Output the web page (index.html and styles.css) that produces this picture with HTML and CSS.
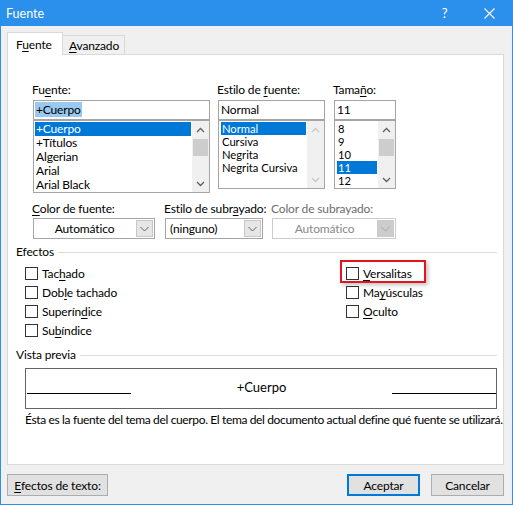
FILE: index.html
```html
<!DOCTYPE html>
<html lang="es">
<head>
<meta charset="utf-8">
<title>Fuente</title>
<link rel="stylesheet" href="styles.css">
</head>
<body>
<div class="window">
  <div class="titlebar">
    <span class="title">Fuente</span>
    <div class="caption">
      <span class="cap-btn help">?</span>
      <span class="cap-btn close"><svg width="11" height="11" viewBox="0 0 11 11"><path d="M0.5 0.5L10.5 10.5M10.5 0.5L0.5 10.5" stroke="#fff" stroke-width="1.1" fill="none"/></svg></span>
    </div>
  </div>
  <div class="client">
    <div class="tabs">
      <div class="tab active">F<u>u</u>ente</div>
      <div class="tab"><u>A</u>vanzado</div>
    </div>
    <div class="panel">
      <div class="font-row">
        <div class="col col-font">
          <div class="label">Fu<u>e</u>nte:</div>
          <div class="input"><span class="sel">+Cuerpo</span></div>
          <div class="list list-font">
            <div class="items">
              <div class="item selected">+Cuerpo</div>
              <div class="item">+Títulos</div>
              <div class="item">Algerian</div>
              <div class="item">Arial</div>
              <div class="item">Arial Black</div>
            </div>
            <div class="scrollbar">
              <div class="arrow-btn"><svg width="9" height="6" viewBox="0 0 9 6"><path d="M1 5L4.5 1.5L8 5" stroke="#606060" stroke-width="1.3" fill="none"/></svg></div>
              <div class="track"><div class="thumb"></div></div>
              <div class="arrow-btn"><svg width="9" height="6" viewBox="0 0 9 6"><path d="M1 1L4.5 4.5L8 1" stroke="#606060" stroke-width="1.3" fill="none"/></svg></div>
            </div>
          </div>
        </div>
        <div class="col col-style">
          <div class="label">Estilo de <u>f</u>uente:</div>
          <div class="input">Normal</div>
          <div class="list list-small">
            <div class="items">
              <div class="item selected">Normal</div>
              <div class="item">Cursiva</div>
              <div class="item">Negrita</div>
              <div class="item">Negrita Cursiva</div>
            </div>
            <div class="scrollbar">
              <div class="arrow-btn"><svg width="9" height="6" viewBox="0 0 9 6"><path d="M1 5L4.5 1.5L8 5" stroke="#c8c8c8" stroke-width="1.3" fill="none"/></svg></div>
              <div class="track"></div>
              <div class="arrow-btn"><svg width="9" height="6" viewBox="0 0 9 6"><path d="M1 1L4.5 4.5L8 1" stroke="#c8c8c8" stroke-width="1.3" fill="none"/></svg></div>
            </div>
          </div>
        </div>
        <div class="col col-size">
          <div class="label">Tama<u>ñ</u>o:</div>
          <div class="input">11</div>
          <div class="list list-small">
            <div class="items">
              <div class="item">8</div>
              <div class="item">9</div>
              <div class="item">10</div>
              <div class="item selected">11</div>
              <div class="item">12</div>
            </div>
            <div class="scrollbar">
              <div class="arrow-btn"><svg width="9" height="6" viewBox="0 0 9 6"><path d="M1 5L4.5 1.5L8 5" stroke="#606060" stroke-width="1.3" fill="none"/></svg></div>
              <div class="track"><div class="thumb"></div></div>
              <div class="arrow-btn"><svg width="9" height="6" viewBox="0 0 9 6"><path d="M1 1L4.5 4.5L8 1" stroke="#606060" stroke-width="1.3" fill="none"/></svg></div>
            </div>
          </div>
        </div>
      </div>

      <div class="combo-row">
        <div class="combo-col c1">
          <div class="label"><u>C</u>olor de fuente:</div>
          <div class="combo">
            <div class="value center">Automático</div>
            <div class="drop"><svg width="9" height="6" viewBox="0 0 9 6"><path d="M0.5 1L4.5 5L8.5 1" stroke="#606060" stroke-width="1" fill="none"/></svg></div>
          </div>
        </div>
        <div class="combo-col c2">
          <div class="label">Estilo de subr<u>a</u>yado:</div>
          <div class="combo">
            <div class="value">(ninguno)</div>
            <div class="drop"><svg width="9" height="6" viewBox="0 0 9 6"><path d="M0.5 1L4.5 5L8.5 1" stroke="#606060" stroke-width="1" fill="none"/></svg></div>
          </div>
        </div>
        <div class="combo-col c3">
          <div class="label disabled-text">Color de subrayado:</div>
          <div class="combo disabled">
            <div class="value center">Automático</div>
            <div class="drop"><svg width="9" height="6" viewBox="0 0 9 6"><path d="M0.5 1L4.5 5L8.5 1" stroke="#a8a8a8" stroke-width="1" fill="none"/></svg></div>
          </div>
        </div>
      </div>

      <div class="group-head head-effects"><span>Efectos</span><div class="rule"></div></div>
      <div class="effects">
        <div class="effects-col left">
          <div class="check"><span class="box"></span><span>Tac<u>h</u>ado</span></div>
          <div class="check"><span class="box"></span><span>Dob<u>l</u>e tachado</span></div>
          <div class="check"><span class="box"></span><span>Superín<u>d</u>ice</span></div>
          <div class="check"><span class="box"></span><span>Su<u>b</u>índice</span></div>
        </div>
        <div class="effects-col">
          <div class="check marked"><span class="box"></span><span><u>V</u>ersalitas</span><span class="highlight"></span></div>
          <div class="check"><span class="box"></span><span>Ma<u>y</u>úsculas</span></div>
          <div class="check"><span class="box"></span><span><u>O</u>culto</span></div>
        </div>
      </div>

      <div class="group-head head-preview"><span>Vista previa</span><div class="rule"></div></div>
      <div class="preview">
        <div class="pline"></div>
        <div class="ptext">+Cuerpo</div>
        <div class="pline"></div>
      </div>
      <div class="note">Ésta es la fuente del tema del cuerpo. El tema del documento actual define qué fuente se utilizará.</div>
    </div>

    <div class="footer">
      <div class="btn btn-effects"><u>E</u>fectos de texto:</div>
      <div class="btn btn-ok">Aceptar</div>
      <div class="btn btn-cancel">Cancelar</div>
    </div>
  </div>
</div>
</body>
</html>
```
FILE: styles.css
```css
* { box-sizing: border-box; }
html, body { margin: 0; padding: 0; }
body {
  width: 513px;
  height: 505px;
  overflow: hidden;
  background: #f0f0f0;
  font-family: Lato, "Noto Sans", sans-serif;
  font-size: 12px;
  letter-spacing: -0.15px;
  color: #000;
}
u { text-decoration: underline; text-underline-offset: 2px; text-decoration-thickness: 1px; }

.window {
  width: 513px;
  height: 505px;
  border: 1px solid #2b8fec;
  border-top: 0;
  display: flex;
  flex-direction: column;
  background: #f0f0f0;
}
.titlebar {
  height: 26px;
  flex: none;
  background: #2b8fec;
  color: #fff;
  display: flex;
  align-items: center;
  padding-left: 5px;
}
.title { font-size: 12.5px; letter-spacing: 0; }
.caption { margin-left: auto; display: flex; height: 26px; }
.cap-btn {
  width: 46px;
  height: 26px;
  display: flex;
  align-items: center;
  justify-content: center;
}
.help { font-size: 13px; padding-left: 3px; }

.client {
  flex: 1;
  display: flex;
  flex-direction: column;
  padding: 6px 8px 0 6px;
}

/* Tabs */
.tabs {
  height: 22px;
  display: flex;
  align-items: flex-end;
}
.tab {
  height: 19px;
  width: 62px;
  border-top: 1px solid #d9d9d9;
  border-right: 1px solid #d9d9d9;
  background: #f0f0f0;
  padding-left: 6px;
  line-height: 19px;
}
.tab.active {
  height: 23px;
  width: 56px;
  margin-bottom: -1px;
  position: relative;
  z-index: 1;
  background: #fff;
  border-left: 1px solid #d9d9d9;
  padding-left: 8px;
  line-height: 23px;
}

/* Panel */
.panel {
  height: 411px;
  flex: none;
  background: #fff;
  border: 1px solid #d9d9d9;
  padding: 27px 6px 0 8px;
}
.label { height: 16px; line-height: 16px; margin-bottom: 2px; margin-left: -1px; white-space: nowrap; }
.disabled-text { color: #6d6d6d; }

.font-row { display: flex; align-items: flex-start; margin-left: 17px; }
.col-font { width: 177px; }
.col-style { width: 107px; margin-left: 8px; }
.col-size { width: 62px; margin-left: 9px; }

.input {
  height: 20px;
  border: 1px solid #a5a5a5;
  padding-left: 2px;
  line-height: 18px;
  white-space: nowrap;
}
.sel { background: #99c9ef; padding: 0 1px; margin-left: -1px; }

.list {
  border: 1px solid #a5a5a5;
  display: flex;
  overflow: hidden;
}
.list-font { height: 73px; }
.list-small { height: 69px; }
.items { flex: 1; min-width: 0; padding: 1px; overflow: hidden; }
.item { height: 14px; line-height: 14px; padding-left: 1px; white-space: nowrap; overflow: hidden; }
.list-small .items { padding: 1px 1px 1px 2px; }
.list-small .item { height: 13px; line-height: 13px; font-size: 11.2px; letter-spacing: 0; }
.item.selected { background: #0078d7; color: #fff; }

.scrollbar {
  width: 17px;
  flex: none;
  background: #f0f0f0;
  display: flex;
  flex-direction: column;
}
.arrow-btn { height: 17px; display: flex; align-items: center; justify-content: center; }
.track { flex: 1; }
.thumb { height: 17px; margin: 1px 1px 0 1px; background: #cdcdcd; }

/* Combos */
.combo-row { display: flex; margin-top: 8px; margin-left: 17px; }
.c1 { width: 122px; }
.c2 { width: 98px; margin-left: 10px; }
.c3 { width: 124px; margin-left: 9px; }
.combo-row .label { margin-bottom: 1px; }
.combo {
  height: 21px;
  border: 1px solid #a5a5a5;
  display: flex;
  background: #fff;
}
.combo .value { flex: 1; line-height: 19px; padding-left: 4px; white-space: nowrap; }
.combo .value.center { text-align: center; padding-left: 0; }
.drop {
  width: 17px;
  margin: 1px;
  background: #e6e6e6;
  border: 1px solid #c8c8c8;
  display: flex;
  align-items: center;
  justify-content: center;
}
.combo.disabled { border-color: #cccccc; }
.combo.disabled .value { color: #8a8a8a; }
.combo.disabled .drop { background: #cccccc; border-color: #cccccc; }

/* Groups */
.group-head { display: flex; align-items: center; height: 16px; line-height: 16px; }
.group-head .rule { flex: 1; height: 1px; background: #dcdcdc; margin-left: 4px; }
.head-effects { margin-top: 5px; }
.head-preview { margin-top: 7px; }

.effects { display: flex; margin-top: 4px; margin-left: 9px; }
.effects-col.left { width: 321px; }
.check {
  height: 19px;
  display: flex;
  align-items: center;
  white-space: nowrap;
}
.box {
  width: 13px;
  height: 13px;
  border: 1px solid #333;
  background: #fff;
  margin-right: 4px;
  flex: none;
}
.marked { position: relative; }
.highlight {
  position: absolute;
  left: -6px;
  top: -4px;
  width: 86px;
  height: 23px;
  border: 2px solid #e3141b;
  box-shadow: 2px 2px 4px rgba(0,0,0,0.25);
}

.preview {
  margin: 5px 0 0 9px;
  height: 41px;
  border: 1px solid #646464;
  display: flex;
  align-items: flex-start;
  padding-top: 10px;
}
.pline { width: 104px; height: 1px; background: #000; margin-top: 14px; flex: none; }
.pline:first-child { margin-left: 1px; }
.ptext { flex: 1; text-align: center; font-size: 13px; line-height: 17px; letter-spacing: 0; }
.note { margin: 3px 0 0 9px; line-height: 16px; white-space: nowrap; letter-spacing: -0.36px; }

/* Footer */
.footer { display: flex; margin-top: 9px; height: 22px; }
.btn {
  height: 22px;
  background: #e1e1e1;
  border: 1px solid #adadad;
  display: flex;
  align-items: center;
  justify-content: center;
  white-space: nowrap;
}
.btn-effects { width: 101px; }
.btn-ok { width: 73px; margin-left: auto; border: 2px solid #0078d7; }
.btn-cancel { width: 73px; margin-left: 11px; }
```
